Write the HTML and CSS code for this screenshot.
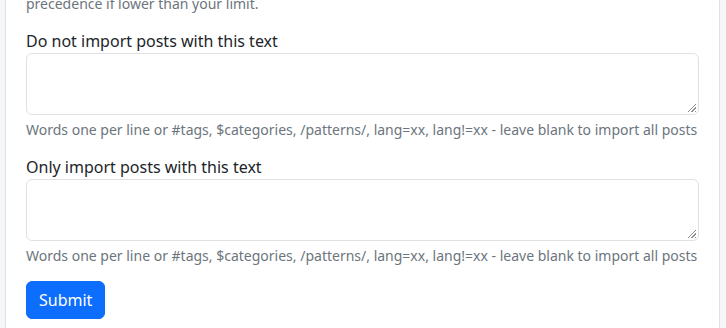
FILE: index.html
```html
<!DOCTYPE html>
<html lang="en">

<head>
    <meta charset="UTF-8" />
    <meta name="viewport" content="width=device-width, initial-scale=1">
    <title>Import settings</title>
    <link rel="stylesheet" href="styles.css">
</head>

<body>
    <div class="page">
        <form class="card">
            <div class="form-group">
                <div class="form-text">precedence if lower than your limit.</div>
            </div>

            <div class="form-group">
                <label class="form-label" for="reject">Do not import posts with this text</label>
                <textarea class="form-control" id="reject" name="reject" rows="2"></textarea>
                <div class="form-text">Words one per line or #tags, $categories, /patterns/, lang=xx, lang!=xx - leave blank to import all posts</div>
            </div>

            <div class="form-group">
                <label class="form-label" for="accept">Only import posts with this text</label>
                <textarea class="form-control" id="accept" name="accept" rows="2"></textarea>
                <div class="form-text">Words one per line or #tags, $categories, /patterns/, lang=xx, lang!=xx - leave blank to import all posts</div>
            </div>

            <button class="btn btn-primary" type="submit">Submit</button>
        </form>
    </div>
</body>

</html>
```

FILE: styles.css
```css
/* base */
html,
body {
    margin: 0;
    padding: 0;
    background: #f5f6f7;
    font-family: "Noto Sans", "Open Sans", sans-serif;
    font-size: 16px;
    line-height: 1.5;
    color: #212529;
}

.page {
    padding: 0 6px 0 5px;
}

/* card scrolled past its top edge */
.card {
    margin-top: -31px;
    padding: 20px 20px 20px 20px;
    background: #fff;
    border: 1px solid #dee2e6;
    border-top: 0;
}

.form-group {
    margin-bottom: 15px;
}

.form-label {
    display: block;
    margin-bottom: 0;
}

.form-control {
    display: block;
    box-sizing: border-box;
    width: 100%;
    padding: 6px 12px;
    font: inherit;
    color: #212529;
    border: 1px solid #dee2e6;
    border-radius: 6px;
    resize: none;
    /* hatched grip in the corner */
    background:
        linear-gradient(to bottom right, #fff 50%, transparent 50%) right 2px bottom 2px / 10px 10px no-repeat,
        repeating-linear-gradient(135deg, #8c8c8c 0 1px, #fff 1px 2.6px) right 2px bottom 2px / 10px 10px no-repeat,
        #fff;
}

.form-text {
    margin-top: 4px;
    font-size: 14px;
    line-height: 21px;
    color: #6c757d;
}

.btn {
    display: inline-block;
    padding: 6px 12px;
    font: inherit;
    border: 1px solid transparent;
    border-radius: 6px;
    cursor: pointer;
}

.btn-primary {
    color: #fff;
    background: #0d6efd;
    border-color: #0d6efd;
}
```
